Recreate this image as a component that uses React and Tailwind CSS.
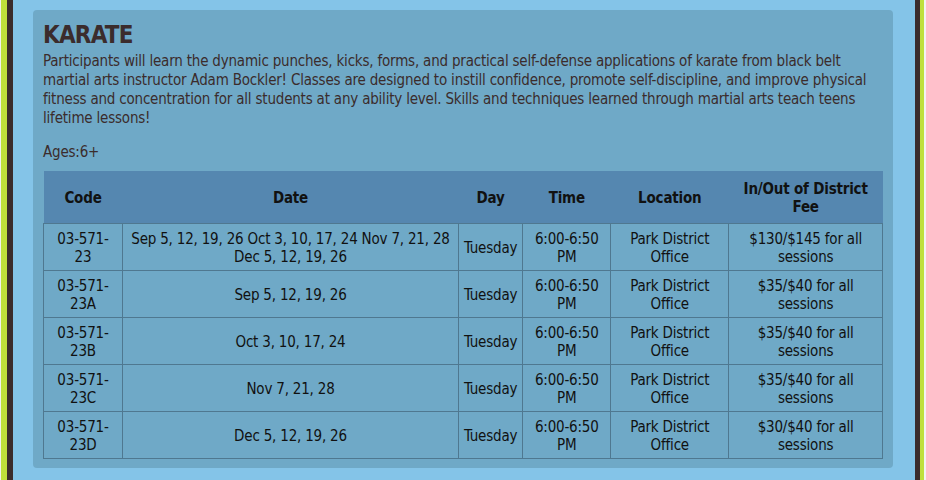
const sessions = [
  {
    code: "03-571-23",
    date: "Sep 5, 12, 19, 26 Oct 3, 10, 17, 24 Nov 7, 21, 28 Dec 5, 12, 19, 26",
    fee: "$130/$145 for all sessions",
  },
  { code: "03-571-23A", date: "Sep 5, 12, 19, 26", fee: "$35/$40 for all sessions" },
  { code: "03-571-23B", date: "Oct 3, 10, 17, 24", fee: "$35/$40 for all sessions" },
  { code: "03-571-23C", date: "Nov 7, 21, 28", fee: "$35/$40 for all sessions" },
  { code: "03-571-23D", date: "Dec 5, 12, 19, 26", fee: "$30/$40 for all sessions" },
];

const td = "border border-[#4f7890] px-[5px] pt-[6px] pb-[4px] text-center align-middle";

export default function App() {
  return (
    <div
      className="flex h-[480px] w-[926px] overflow-hidden tracking-[-0.2px]"
      style={{ fontFamily: '"DejaVu Sans Condensed", "DejaVu Sans", sans-serif' }}
    >
      <div className="w-px bg-[#f2f2f2]" />
      <div className="w-[6px] bg-[#bfe03c]" />
      <div className="w-[6px] bg-[#3b2c2c]" />
      <main className="flex-1 bg-[#84c4e8] pl-[20px] pr-[22px] pt-[10px]">
        <section className="h-[458px] rounded-[4px] bg-[#6fa9c7] px-[10px] pt-[11px] pb-[10px] text-[#3b2c2c]">
          <h1 className="text-[24px] font-bold leading-[28px] tracking-[-0.8px]">KARATE</h1>
          <p className="mt-[3px] text-[15px] leading-[19px]">
            Participants will learn the dynamic punches, kicks, forms, and practical
            self-defense applications of karate from black belt martial arts instructor
            Adam Bockler! Classes are designed to instill confidence, promote
            self-discipline, and improve physical fitness and concentration for all
            students at any ability level. Skills and techniques learned through martial
            arts teach teens lifetime lessons!
          </p>
          <p className="mt-[15px] text-[15px] leading-[19px]">Ages:6+</p>
          <table className="mt-[9px] w-[840px] border-collapse text-[15px] leading-[18px] text-[#111]">
            <thead>
              <tr className="h-[52px] bg-[#5587b0] font-bold">
                <th className="w-[79px] px-1 pt-[2px]">Code</th>
                <th className="w-[336px] px-1 pt-[2px]">Date</th>
                <th className="w-[64px] px-1 pt-[2px]">Day</th>
                <th className="w-[88px] px-1 pt-[2px]">Time</th>
                <th className="w-[118px] px-1 pt-[2px]">Location</th>
                <th className="px-1 pt-[2px]">In/Out of District Fee</th>
              </tr>
            </thead>
            <tbody>
              {sessions.map((s) => (
                <tr key={s.code} className="h-[47px]">
                  <td className={td}>
                    <div className="mx-auto w-[60px]">{s.code}</div>
                  </td>
                  <td className={td}>{s.date}</td>
                  <td className={td}>Tuesday</td>
                  <td className={td}>6:00-6:50 PM</td>
                  <td className={td}>Park District Office</td>
                  <td className={td}>{s.fee}</td>
                </tr>
              ))}
            </tbody>
          </table>
        </section>
      </main>
      <div className="w-[5px] bg-[#3b2c2c]" />
      <div className="w-[4px] bg-[#bfe03c]" />
      <div className="w-[2px] bg-[#f2f2f2]" />
    </div>
  );
}
